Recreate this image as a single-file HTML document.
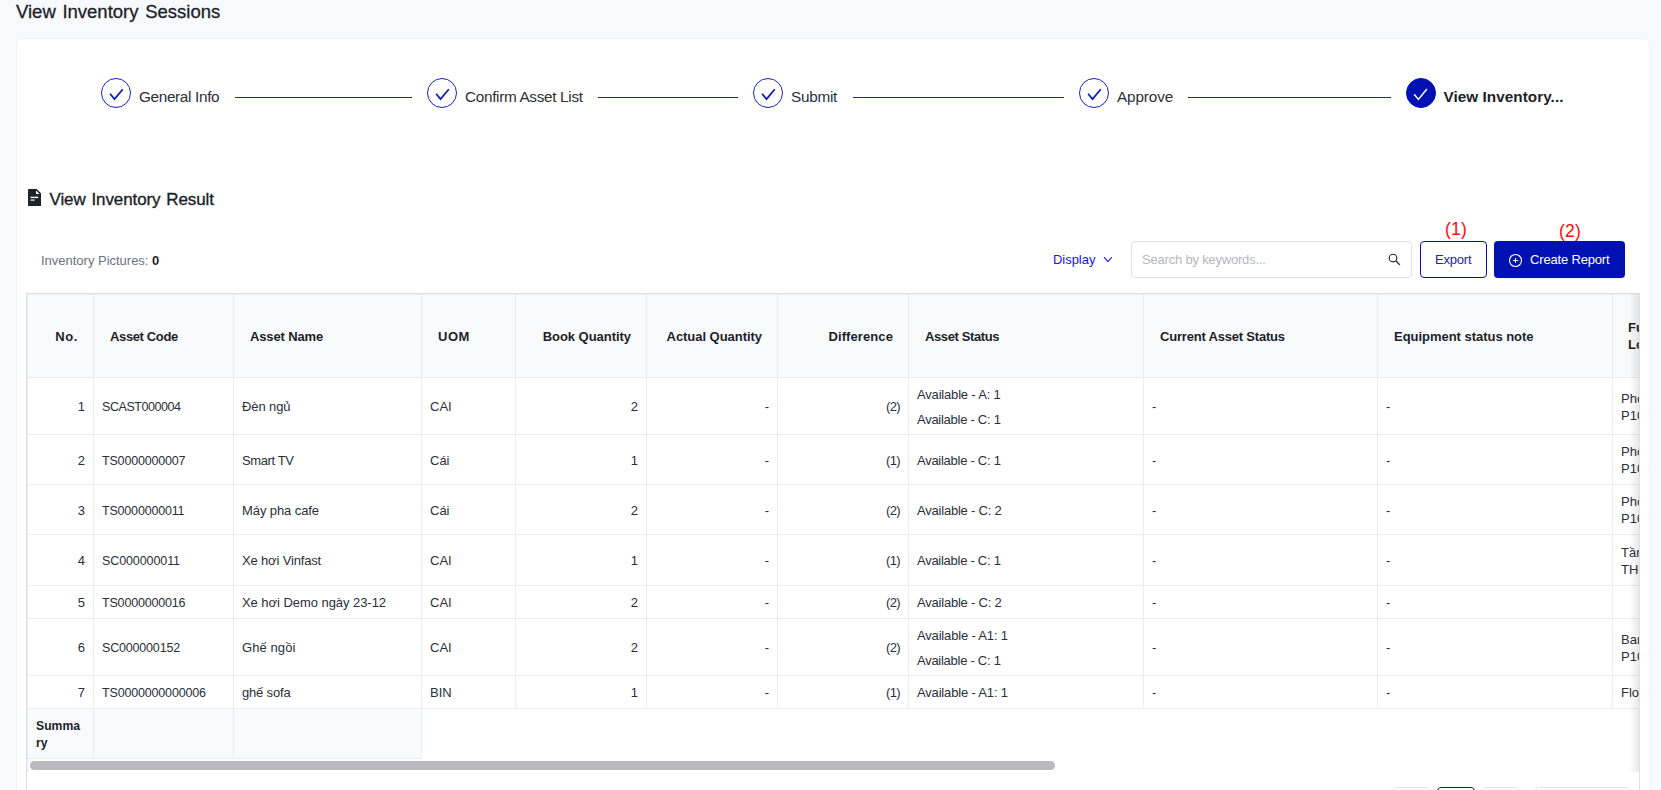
<!DOCTYPE html>
<html lang="en">
<head>
<meta charset="utf-8">
<title>View Inventory Sessions</title>
<style>
*{box-sizing:border-box;margin:0;padding:0}
html,body{width:1661px;height:790px;overflow:hidden;background:#f8f9fb;font-family:"Liberation Sans","DejaVu Sans",sans-serif;color:#1f2430}
.abs{position:absolute;white-space:nowrap}
#title{left:16px;top:1px;word-spacing:1.500px;font-size:18.500px;line-height:22px;color:#1b1f2a;-webkit-text-stroke:.300px #1b1f2a}
#card{position:absolute;left:16px;top:38px;width:1634px;height:770px;background:#fff;border:1px solid #f1f2f6;border-radius:5px}
.step{position:absolute;top:78px;height:30px}
.circ{position:absolute;left:0;top:0;width:30px;height:30px;border-radius:50%;border:1.300px solid #1822bd;background:#fff}
.circ.on{background:#0011b4;border-color:#0011b4}
.circ svg{position:absolute;left:-1.300px;top:-1.300px;width:30px;height:30px}
.slabel{position:absolute;left:38px;top:8px;font-size:15.300px;line-height:22px;color:#2a2f3a;white-space:nowrap}
.slabel.cur{font-weight:700;color:#1b1f2a;left:37.500px}
.sline{position:absolute;top:97px;height:1px;background:#1822bd}
#h2{left:49.500px;top:188px;word-spacing:1.200px;font-size:17px;line-height:24px;color:#1b1f2a;-webkit-text-stroke:.350px #1b1f2a}
#pics{left:41px;top:252px;font-size:13px;line-height:18px;color:#6b7280}
#pics b{color:#1b1f2a}
#disp{left:1053px;top:251px;font-size:13px;line-height:18px;color:#1515ee}
#search{position:absolute;left:1131px;top:241px;width:281px;height:37px;border:1px solid #dfe2ea;border-radius:4px;background:#fff}
#ph{left:1142px;top:251px;font-size:13px;line-height:18px;color:#b3b7be}
.btn{position:absolute;top:241px;height:37px;border-radius:4px;font-size:13px;white-space:nowrap}
#bexp{left:1420px;width:67px;border:1.400px solid #0011b4;background:#fff;color:#1a22c0}
#bexp div{position:absolute;left:14px;top:0;line-height:36px}
#bcr{left:1494px;width:131px;background:#0011b4;color:#fff;box-shadow:0 1px 2px rgba(0,0,0,.080)}
#bcr div{position:absolute;left:36px;top:0;line-height:37px}
.red{font-size:17.500px;line-height:20px;color:#ff0a0a}
#outer{position:absolute;left:26px;top:293px;width:1614px;height:520px;border:1px solid #dde0e5;background:#fff}
#twrap{position:absolute;left:27px;top:294px;width:1612px;height:478px;overflow:hidden;background:#fff;padding:1px 0 0 1px;box-shadow:inset 1px 1px 0 #eceef2}
#twrap:after{content:"";position:absolute;right:0;top:0;width:10px;height:100%;background:linear-gradient(to right,rgba(0,0,0,0),rgba(0,0,0,.090))}
table{border-collapse:separate;border-spacing:0;table-layout:fixed;width:1800px;font-size:13px;color:#2a2f3a}
td.code{font-size:12.500px;padding-top:3px}
th,td{border-right:1px solid #ececef;border-bottom:1px solid #ececef;overflow:hidden;white-space:nowrap;vertical-align:middle;line-height:17px}
th{background:#f9fafb;font-weight:700;color:#1b1f2a;text-align:left;padding:0 16px;height:83px;font-size:13px}
th.r,td.r{text-align:right}
th.r{padding-right:15px}
td{padding:1px 8px 0;background:#fff}
td.st{padding-top:2px}
td.st div{line-height:25px}
td.sum{background:#f9fafb;font-weight:700;font-size:12.200px;color:#1b1f2a;line-height:17px;white-space:normal;word-break:break-all}
td.nb{border-right:none;border-bottom:none}
#sbar{position:absolute;left:30px;top:761px;width:1025px;height:8.500px;border-radius:4.250px;background:#b9b9bf}
.pg{position:absolute;top:787px;height:20px;border:1px solid #e3e5ea;border-radius:4px;background:#fff}
</style>
</head>
<body>
<div id="title" class="abs"><span>View Inventory Sessions</span></div>
<div id="card"></div>
<div class="step" style="left:101px"><div class="circ"><svg viewBox="0 0 30 30"><path d="M9.100 15.800L13.500 21.100 21.800 11.300" fill="none" stroke="#0d17b8" stroke-width="1.700"/></svg></div><div class="slabel"><span style="letter-spacing:-0.33px">General Info</span></div></div>
<div class="sline" style="left:235px;width:177px"></div>
<div class="step" style="left:427px"><div class="circ"><svg viewBox="0 0 30 30"><path d="M9.100 15.800L13.500 21.100 21.800 11.300" fill="none" stroke="#0d17b8" stroke-width="1.700"/></svg></div><div class="slabel"><span style="letter-spacing:-0.31px">Confirm Asset List</span></div></div>
<div class="sline" style="left:598px;width:140px"></div>
<div class="step" style="left:753px"><div class="circ"><svg viewBox="0 0 30 30"><path d="M9.100 15.800L13.500 21.100 21.800 11.300" fill="none" stroke="#0d17b8" stroke-width="1.700"/></svg></div><div class="slabel"><span style="letter-spacing:-0.27px">Submit</span></div></div>
<div class="sline" style="left:853px;width:211px"></div>
<div class="step" style="left:1079px"><div class="circ"><svg viewBox="0 0 30 30"><path d="M9.100 15.800L13.500 21.100 21.800 11.300" fill="none" stroke="#0d17b8" stroke-width="1.700"/></svg></div><div class="slabel"><span style="letter-spacing:-0.12px">Approve</span></div></div>
<div class="sline" style="left:1188px;width:203px"></div>
<div class="step" style="left:1406px"><div class="circ on"><svg viewBox="0 0 30 30"><path d="M8.100 16.200L12.400 21.400 20.900 11.100" fill="none" stroke="#fff" stroke-width="1.500"/></svg></div><div class="slabel cur"><span style="letter-spacing:0.04px">View Inventory...</span></div></div>
<svg class="abs" style="left:28px;top:189px" width="13" height="17" viewBox="0 0 13 17"><path d="M.600 0H8.700L13 4.300V16.400a.600.600 0 0 1-.600.600H.600a.600.600 0 0 1-.600-.600V.600A.600.600 0 0 1 .600 0z" fill="#1d252c"/><path d="M8 1.600V5.100H11.500z" fill="#fff"/><rect x="2.600" y="7.700" width="7.600" height="1.400" fill="#fff"/><rect x="2.600" y="10.400" width="4" height="1.400" fill="#fff" opacity=".85"/></svg>
<div id="h2" class="abs"><span style="letter-spacing:-0.10px">View Inventory Result</span></div>
<div id="pics" class="abs"><span style="letter-spacing:-0.01px">Inventory Pictures: <b>0</b></span></div>
<div id="disp" class="abs"><span style="letter-spacing:-0.04px">Display</span></div>
<svg class="abs" style="left:1102px;top:255px" width="11" height="9" viewBox="0 0 11 9"><path d="M2 2.200L5.900 6.700 9.800 2.200" fill="none" stroke="#1c1ce0" stroke-width="1.100"/></svg>
<div id="search"></div>
<div id="ph" class="abs"><span style="letter-spacing:-0.20px">Search by keywords...</span></div>
<svg class="abs" style="left:1388px;top:253px" width="13" height="13" viewBox="0 0 13 13"><circle cx="5" cy="5" r="3.800" fill="none" stroke="#1d252c" stroke-width="1.150"/><path d="M7.800 7.800L11.800 11.900" stroke="#1d252c" stroke-width="1.350"/></svg>
<div class="abs red" style="left:1445px;top:219px"><span style="letter-spacing:0.17px">(1)</span></div>
<div class="abs red" style="left:1559px;top:221px"><span style="letter-spacing:0.17px">(2)</span></div>
<div id="bexp" class="btn"><div><span style="letter-spacing:-0.20px">Export</span></div></div>
<div id="bcr" class="btn"><svg style="position:absolute;left:14px;top:12px" width="15" height="15" viewBox="0 0 15 15"><circle cx="7.500" cy="7.500" r="6" fill="none" stroke="#fff" stroke-width="1.100"/><path d="M7.500 4.900v5.200M4.900 7.500h5.200" stroke="#fff" stroke-width="1.050"/></svg><div><span style="letter-spacing:-0.17px">Create Report</span></div></div>
<div id="outer"></div>
<div id="twrap"><table>
<colgroup><col style="width:66px"><col style="width:140px"><col style="width:188px"><col style="width:94px"><col style="width:131px"><col style="width:131px"><col style="width:131px"><col style="width:235px"><col style="width:234px"><col style="width:235px"><col style="width:215px"></colgroup>
<thead><tr><th class="r"><span style="letter-spacing:0.60px">No.</span></th><th><span style="letter-spacing:-0.37px">Asset Code</span></th><th><span style="letter-spacing:-0.14px">Asset Name</span></th><th><span style="letter-spacing:0.56px">UOM</span></th><th class="r"><span style="letter-spacing:-0.04px">Book Quantity</span></th><th class="r"><span style="letter-spacing:-0.04px">Actual Quantity</span></th><th class="r"><span style="letter-spacing:0.09px">Difference</span></th><th><span style="letter-spacing:-0.38px">Asset Status</span></th><th><span style="letter-spacing:-0.20px">Current Asset Status</span></th><th><span style="letter-spacing:-0.03px">Equipment status note</span></th><th style="padding-left:15px">Function<br>Location</th></tr></thead>
<tbody>
<tr style="height:57px"><td class="r">1</td><td class="code"><span style="letter-spacing:-0.44px">SCAST000004</span></td><td><span style="letter-spacing:-0.10px">Đèn ngủ</span></td><td><span>CAI</span></td><td class="r">2</td><td class="r">-</td><td class="r"><span style="letter-spacing:-0.64px">(2)</span></td><td class="st"><div><span style="letter-spacing:-0.18px">Available - A: 1</span></div><div><span style="letter-spacing:-0.27px">Available - C: 1</span></div></td><td>-</td><td>-</td><td>Phòng họp<br>P101</td></tr>
<tr style="height:50px"><td class="r">2</td><td class="code"><span style="letter-spacing:-0.18px">TS0000000007</span></td><td><span style="letter-spacing:-0.39px">Smart TV</span></td><td><span>Cái</span></td><td class="r">1</td><td class="r">-</td><td class="r"><span style="letter-spacing:-0.64px">(1)</span></td><td><span style="letter-spacing:-0.27px">Available - C: 1</span></td><td>-</td><td>-</td><td>Phòng họp<br>P102</td></tr>
<tr style="height:50px"><td class="r">3</td><td class="code"><span style="letter-spacing:-0.19px">TS0000000011</span></td><td><span style="letter-spacing:-0.09px">Máy pha cafe</span></td><td><span>Cái</span></td><td class="r">2</td><td class="r">-</td><td class="r"><span style="letter-spacing:-0.64px">(2)</span></td><td><span style="letter-spacing:-0.21px">Available - C: 2</span></td><td>-</td><td>-</td><td>Phòng họp<br>P103</td></tr>
<tr style="height:51px"><td class="r">4</td><td class="code"><span style="letter-spacing:-0.10px">SC000000011</span></td><td><span style="letter-spacing:-0.16px">Xe hơi Vinfast</span></td><td><span>CAI</span></td><td class="r">1</td><td class="r">-</td><td class="r"><span style="letter-spacing:-0.64px">(1)</span></td><td><span style="letter-spacing:-0.27px">Available - C: 1</span></td><td>-</td><td>-</td><td>Tầng 1<br>TH-01</td></tr>
<tr style="height:33px"><td class="r">5</td><td class="code"><span style="letter-spacing:-0.18px">TS0000000016</span></td><td><span style="letter-spacing:-0.05px">Xe hơi Demo ngày 23-12</span></td><td><span>CAI</span></td><td class="r">2</td><td class="r">-</td><td class="r"><span style="letter-spacing:-0.64px">(2)</span></td><td><span style="letter-spacing:-0.21px">Available - C: 2</span></td><td>-</td><td>-</td><td></td></tr>
<tr style="height:57px"><td class="r">6</td><td class="code"><span style="letter-spacing:-0.18px">SC000000152</span></td><td><span style="letter-spacing:0.09px">Ghế ngồi</span></td><td><span>CAI</span></td><td class="r">2</td><td class="r">-</td><td class="r"><span style="letter-spacing:-0.64px">(2)</span></td><td class="st"><div><span style="letter-spacing:-0.17px">Available - A1: 1</span></div><div><span style="letter-spacing:-0.27px">Available - C: 1</span></div></td><td>-</td><td>-</td><td>Ban giám đốc<br>P105</td></tr>
<tr style="height:33px"><td class="r">7</td><td class="code"><span style="letter-spacing:-0.17px">TS0000000000006</span></td><td><span style="letter-spacing:-0.17px">ghế sofa</span></td><td><span>BIN</span></td><td class="r">1</td><td class="r">-</td><td class="r"><span style="letter-spacing:-0.64px">(1)</span></td><td><span style="letter-spacing:-0.17px">Available - A1: 1</span></td><td>-</td><td>-</td><td>Floor 1</td></tr>
<tr style="height:50px"><td class="sum" style="padding:3px 10px 0 8px"><span>Summary</span></td><td class="sum"></td><td class="sum"></td><td class="nb" colspan="8"></td></tr>
</tbody></table></div>
<div id="sbar"></div>
<div class="pg" style="left:1392px;width:38px"></div>
<div class="pg" style="left:1437px;width:38px;border:1.500px solid #0a14b0"></div>
<div class="pg" style="left:1482px;width:38px"></div>
<div class="pg" style="left:1535px;width:95px"></div>
</body>
</html>
